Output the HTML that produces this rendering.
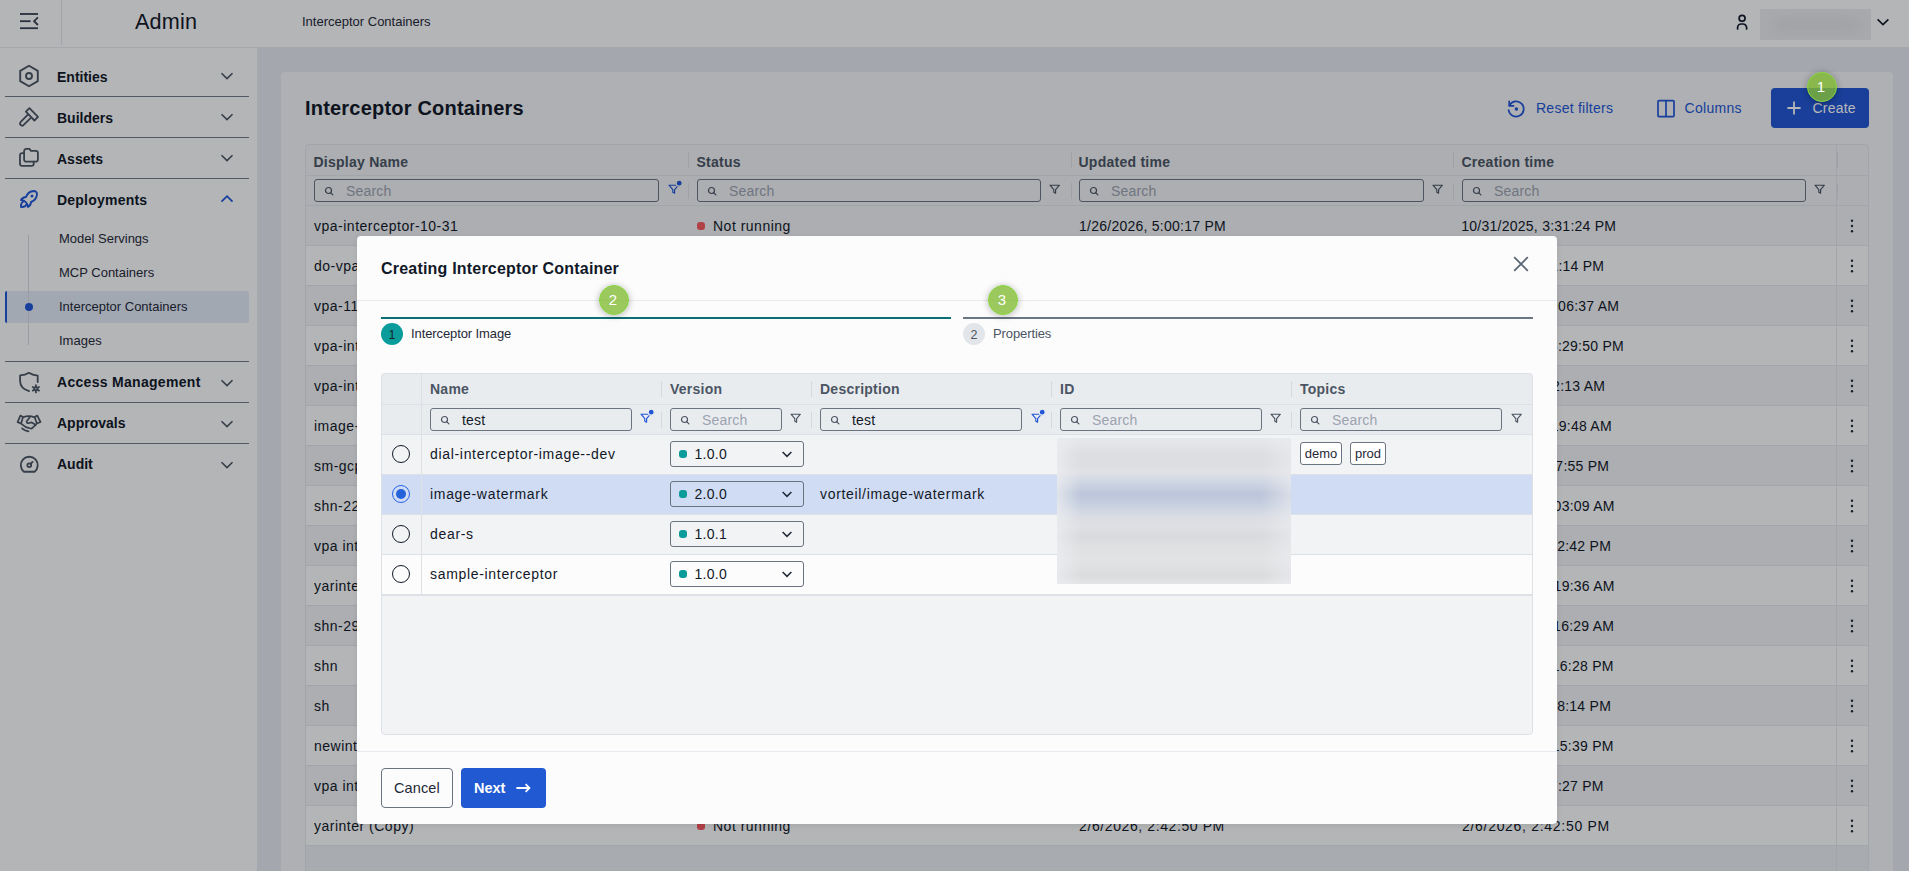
<!DOCTYPE html>
<html><head><meta charset="utf-8">
<style>
*{box-sizing:border-box;margin:0;padding:0}
html,body{width:1909px;height:871px;overflow:hidden;font-family:"Liberation Sans",sans-serif;color:#111827;background:#e9ecf0}
.abs{position:absolute}
.t{position:absolute;white-space:nowrap;line-height:1}
svg{position:absolute;overflow:visible}
.bd{position:absolute;left:0;top:0;right:0;bottom:0;pointer-events:none}
#header{left:0;top:0;width:1909px;height:48px;background:#fcfcfc;border-bottom:1px solid #e8eaee}
#sidebar{left:0;top:48px;width:257px;height:823px;background:#fcfcfc}
#main{left:257px;top:48px;width:1652px;height:823px;background:#e6e9ee}
#card{left:281px;top:72px;width:1612px;height:820px;background:#f4f5f7;border-radius:4px}
.inp{border:1px solid #6b7280;border-radius:3px}
.hd{font-size:14px;font-weight:700;color:#4b5563;letter-spacing:0.25px;margin-left:-0.5px}
.cell{font-size:14px;color:#111827;letter-spacing:0.5px;margin-top:-1.5px}
.mcell{letter-spacing:0.68px;margin-top:-1px}
.navdiv{position:absolute;left:5px;width:244px;height:1px;background:#747c89}
.navt{font-size:14px;font-weight:700;color:#111827;letter-spacing:0px;margin-top:0.5px}
.subt{font-size:13px;color:#1f2937}
#overlay{left:0;top:0;width:1909px;height:871px;background:rgba(5,8,15,0.29)}
#modal{left:357px;top:236px;width:1200px;height:588px;background:#fcfcfd;border-radius:4px;box-shadow:0 2px 6px rgba(0,0,0,0.08)}
.badge{width:30px;height:30px;border-radius:50%;background:rgba(129,187,49,0.79);border:1.8px solid #86d43c;box-shadow:0 1px 7px rgba(0,0,0,0.3)}
.tag{height:23px;border:1px solid #6b7280;border-radius:3px;background:#fff;font-size:13px;color:#1f2937;text-align:center;line-height:21px}
</style></head><body>
<div id="header" class="abs">
  <svg style="left:0;top:0" width="60" height="47" viewBox="0 0 60 47"><g stroke="#374151" stroke-width="1.8" fill="none" stroke-linecap="butt"><path d="M20 14H38"/><path d="M20 21.2H30.6"/><path d="M20 28.2H38"/><path d="M37.9 17.4L34.1 21.2L37.9 25"/></g></svg>
  <div class="abs" style="left:61px;top:0;width:1px;height:45px;background:#e3e6ea"></div>
  <div class="t" style="left:135px;top:11px;font-size:21.6px;color:#111827;letter-spacing:0.2px">Admin</div>
  <div class="t" style="left:302px;top:15px;font-size:13px;color:#1f2937">Interceptor Containers</div>
  <svg style="left:1730px;top:10px" width="24" height="24" viewBox="0 0 24 24"><g stroke="#111827" stroke-width="1.7" fill="none" stroke-linecap="round"><circle cx="12.1" cy="8.3" r="3"/><path d="M7.6 19V17.6A3.6 3.6 0 0 1 11.2 14H13A3.6 3.6 0 0 1 16.6 17.6V19"/></g></svg>
  <div class="abs" style="left:1760px;top:9px;width:111px;height:31px;background:#ececed;overflow:hidden"><div class="abs" style="left:14px;top:10px;width:85px;height:12px;background:#e0e0e2;filter:blur(6px)"></div></div>
  <svg style="left:1870px;top:12px" width="24" height="20" viewBox="0 0 24 20"><path d="M7.6 7.4L13 12.6L18.4 7.4" stroke="#111827" stroke-width="1.6" fill="none"/></svg>
</div>
<div id="sidebar" class="abs"></div>
<div class="abs" style="left:0;top:0;width:257px;height:871px">
  <svg style="left:17px;top:64px" width="24" height="24" viewBox="0 0 24 24"><g stroke="#4b5563" stroke-width="1.9" fill="none" stroke-linejoin="round"><path d="M12 1.8L20.8 6.9V17.1L12 22.2L3.2 17.1V6.9Z"/><circle cx="12" cy="12" r="3"/></g></svg>
  <div class="t navt" style="left:57px;top:69px">Entities</div>
  <svg style="left:216px;top:65px" width="22" height="22" viewBox="0 0 22 22"><path d="M5.5 8.2L11 13.6L16.5 8.2" stroke="#4b5563" stroke-width="1.6" fill="none"/></svg>
  <div class="navdiv" style="top:96px"></div>
  <svg style="left:17px;top:105px" width="24" height="24" viewBox="0 0 24 24"><g stroke="#4b5563" stroke-width="1.8" fill="none" stroke-linejoin="round" stroke-linecap="round"><path d="M12.4 3.1L21 11.8L17.4 15.5L8.9 6.7Z"/><path d="M10.6 9.9L3.5 17.2A2.1 2.1 0 0 0 6.4 20.2L13.6 13.1"/></g></svg>
  <div class="t navt" style="left:57px;top:110px">Builders</div>
  <svg style="left:216px;top:106px" width="22" height="22" viewBox="0 0 22 22"><path d="M5.5 8.2L11 13.6L16.5 8.2" stroke="#4b5563" stroke-width="1.6" fill="none"/></svg>
  <div class="navdiv" style="top:137px"></div>
  <svg style="left:17px;top:146px" width="24" height="24" viewBox="0 0 24 24"><g stroke="#4b5563" stroke-width="1.8" fill="none" stroke-linejoin="round" stroke-linecap="round"><path d="M7.1 5A2.1 2.1 0 0 1 9.2 2.9H12.4L14 4.8H18.8A2.1 2.1 0 0 1 20.9 6.9V13.6A2.1 2.1 0 0 1 18.8 15.7H9.2A2.1 2.1 0 0 1 7.1 13.6Z"/><path d="M7.1 7.1H5.1A2.1 2.1 0 0 0 3 9.2V17.8A2.1 2.1 0 0 0 5.1 19.9H14.6A2.1 2.1 0 0 0 16.7 17.8V15.7"/></g></svg>
  <div class="t navt" style="left:57px;top:151px">Assets</div>
  <svg style="left:216px;top:147px" width="22" height="22" viewBox="0 0 22 22"><path d="M5.5 8.2L11 13.6L16.5 8.2" stroke="#4b5563" stroke-width="1.6" fill="none"/></svg>
  <div class="navdiv" style="top:178px"></div>
  <svg style="left:17px;top:187px" width="24" height="24" viewBox="0 0 24 24"><g stroke="#2256d6" stroke-width="1.9" fill="none" stroke-linejoin="round" stroke-linecap="round"><path d="M4 13a8 8 0 0 1 7 7a6 6 0 0 0 3 -5a9 9 0 0 0 6 -8a3 3 0 0 0 -3 -3a9 9 0 0 0 -8 6a6 6 0 0 0 -5 3"/><path d="M7 14a6 6 0 0 0 -3 6a6 6 0 0 0 6 -3"/></g><circle cx="15" cy="9" r="1.5" fill="#2256d6"/></svg>
  <div class="t navt" style="left:57px;top:192px;letter-spacing:0.22px">Deployments</div>
  <svg style="left:216px;top:188px" width="22" height="22" viewBox="0 0 22 22"><path d="M5.5 13.6L11 8.2L16.5 13.6" stroke="#2256d6" stroke-width="1.8" fill="none"/></svg>
  <div class="t subt" style="left:59px;top:232px">Model Servings</div>
  <div class="t subt" style="left:59px;top:266px">MCP Containers</div>
  <div class="abs" style="left:5px;top:291px;width:244px;height:32px;background:#e3eaf6;border-left:2px solid #2256d6;border-radius:2px"></div>
  <div class="abs" style="left:28px;top:235px;width:1px;height:110px;background:#d7dbe0"></div>
  <div class="abs" style="left:25px;top:302.5px;width:8px;height:8px;border-radius:50%;background:#2256d6"></div>
  <div class="t subt" style="left:59px;top:300px">Interceptor Containers</div>
  <div class="t subt" style="left:59px;top:334px">Images</div>
  <div class="navdiv" style="top:361px"></div>
  <svg style="left:17px;top:371px" width="24" height="24" viewBox="0 0 24 24"><g stroke="#4b5563" stroke-width="1.8" fill="none" stroke-linejoin="round" stroke-linecap="round"><path d="M20.7 11.1V4.6C17 4.3 14.2 3.4 11.9 1.8C9.6 3.4 6.8 4.3 3.1 4.4V10.1C3.1 15 6.6 18.6 12.1 20.1"/><circle cx="18.9" cy="17.8" r="1.6"/><path d="M18.9 14.2V15.8M18.9 19.8V21.4M15.8 16L17.2 16.8M20.6 18.8L22 19.6M15.8 19.6L17.2 18.8M20.6 16.8L22 16"/></g></svg>
  <div class="t navt" style="left:57px;top:374px;letter-spacing:0.3px">Access Management</div>
  <svg style="left:216px;top:372px" width="22" height="22" viewBox="0 0 22 22"><path d="M5.5 8.2L11 13.6L16.5 8.2" stroke="#4b5563" stroke-width="1.6" fill="none"/></svg>
  <div class="navdiv" style="top:402px"></div>
  <svg style="left:17px;top:411px" width="26" height="24" viewBox="0 0 26 24"><g stroke="#4b5563" stroke-width="1.7" fill="none" stroke-linejoin="round" stroke-linecap="round"><path d="M3.4 4.6L6 6L4.1 12.5L0.6 11.1Z"/><path d="M20.3 4.6L17.7 6.1L19.8 12.5L23.5 11Z"/><path d="M6 6.3Q11.9 3.7 17.6 6.4"/><path d="M4.1 12.6L8.8 16.1L14.6 17.7L19.2 13.4"/><path d="M12.9 6.1L9.6 10.6Q9.8 12.5 11.4 12.2L14.6 11.4L18.6 13.8"/><path d="M5 17.3Q7.4 19.4 11.5 20.3"/></g></svg>
  <div class="t navt" style="left:57px;top:415px">Approvals</div>
  <svg style="left:216px;top:413px" width="22" height="22" viewBox="0 0 22 22"><path d="M5.5 8.2L11 13.6L16.5 8.2" stroke="#4b5563" stroke-width="1.6" fill="none"/></svg>
  <div class="navdiv" style="top:443px"></div>
  <svg style="left:17.7px;top:453.1px" width="22.56" height="22.56" viewBox="0 0 24 24"><g stroke="#4b5563" stroke-width="1.95" fill="none" stroke-linejoin="round" stroke-linecap="round"><path d="M6.4 20a9 9 0 1 1 11.2 0z"/><circle cx="12" cy="13" r="2"/><path d="M13.45 11.55L15.5 9.5"/></g></svg>
  <div class="t navt" style="left:57px;top:456px">Audit</div>
  <svg style="left:216px;top:454px" width="22" height="22" viewBox="0 0 22 22"><path d="M5.5 8.2L11 13.6L16.5 8.2" stroke="#4b5563" stroke-width="1.6" fill="none"/></svg>
</div>
<div id="main" class="abs"></div>
<div id="card" class="abs"></div>
<div class="t" style="left:305px;top:98px;font-size:20px;font-weight:700;color:#111827;letter-spacing:0.2px">Interceptor Containers</div>
<svg style="left:1505px;top:98px" width="22" height="22" viewBox="0 0 22 22"><g stroke="#2256d6" stroke-width="1.7" fill="none" stroke-linecap="round" stroke-linejoin="round"><path d="M4.4 7.4A7.6 7.6 0 1 1 3.6 12"/><path d="M4.2 3.4V7.8H8.6"/><circle cx="11.4" cy="11" r="0.9" fill="#2256d6"/></g></svg>
<div class="t" style="left:1536px;top:101px;font-size:14px;color:#2256d6;letter-spacing:0.25px">Reset filters</div>
<svg style="left:1654px;top:97px" width="22" height="22" viewBox="0 0 22 22"><g stroke="#2256d6" stroke-width="1.7" fill="none"><rect x="4" y="3.6" width="16" height="16" rx="1"/><path d="M12 3.6V19.6"/></g></svg>
<div class="t" style="left:1684.5px;top:101px;font-size:14px;color:#2256d6;letter-spacing:0.3px">Columns</div>
<div class="abs" style="left:1771px;top:88px;width:98px;height:40px;background:#2257d3;border-radius:4px"></div>
<svg style="left:1783px;top:97px" width="22" height="22" viewBox="0 0 22 22"><path d="M11 4.4V17.6M4.4 11H17.6" stroke="#fff" stroke-width="1.8"/></svg>
<div class="t" style="left:1812.5px;top:101px;font-size:14px;color:#fff;letter-spacing:0.2px">Create</div>
<div class="abs" style="left:305px;top:144px;width:1564px;height:740px;background:#eceef1;border-radius:4px;overflow:hidden"><div class="abs" style="left:0;top:0;width:1564px;height:62px;background:#f1f2f4"></div><div class="abs" style="left:0;top:31px;width:1564px;height:1px;background:#e3e6ea"></div><div class="abs" style="left:0;top:61px;width:1564px;height:1px;background:#e3e6ea"></div><div class="abs" style="left:0;top:62px;width:1564px;height:40px;background:#f1f2f4;border-bottom:1px solid #e3e6ea"></div><div class="t cell" style="left:9px;top:76px">vpa-interceptor-10-31</div><div class="abs" style="left:392px;top:78px;width:8px;height:8px;border-radius:3px;background:#f75a5f"></div><div class="t cell" style="left:408px;top:76px">Not running</div><div class="t cell" style="left:774px;top:76px;letter-spacing:0.25px">1/26/2026, 5:00:17 PM</div><div class="t cell" style="right:252.75px;top:76px;letter-spacing:0.25px">10/31/2025, 3:31:24 PM</div><svg style="left:1541px;top:74px" width="12" height="16" viewBox="0 0 12 16"><g fill="#1f2937"><circle cx="6" cy="2.8" r="1.2"/><circle cx="6" cy="8" r="1.2"/><circle cx="6" cy="13.2" r="1.2"/></g></svg><div class="abs" style="left:0;top:102px;width:1564px;height:40px;background:#fcfcfc;border-bottom:1px solid #e3e6ea"></div><div class="t cell" style="left:9px;top:116px">do-vpa-interceptor</div><div class="abs" style="left:392px;top:118px;width:8px;height:8px;border-radius:3px;background:#f75a5f"></div><div class="t cell" style="left:408px;top:116px">Not running</div><div class="t cell" style="left:774px;top:116px;letter-spacing:0.25px">1/20/2026, 4:11:14 PM</div><div class="t cell" style="right:264.75px;top:116px;letter-spacing:0.25px">11/3/2025, 1:21:14 PM</div><svg style="left:1541px;top:114px" width="12" height="16" viewBox="0 0 12 16"><g fill="#1f2937"><circle cx="6" cy="2.8" r="1.2"/><circle cx="6" cy="8" r="1.2"/><circle cx="6" cy="13.2" r="1.2"/></g></svg><div class="abs" style="left:0;top:142px;width:1564px;height:40px;background:#f1f2f4;border-bottom:1px solid #e3e6ea"></div><div class="t cell" style="left:9px;top:156px">vpa-11-interceptor</div><div class="abs" style="left:392px;top:158px;width:8px;height:8px;border-radius:3px;background:#f75a5f"></div><div class="t cell" style="left:408px;top:156px">Not running</div><div class="t cell" style="left:774px;top:156px;letter-spacing:0.25px">1/15/2026, 10:06:37 AM</div><div class="t cell" style="right:249.75px;top:156px;letter-spacing:0.25px">11/4/2025, 10:06:37 AM</div><svg style="left:1541px;top:154px" width="12" height="16" viewBox="0 0 12 16"><g fill="#1f2937"><circle cx="6" cy="2.8" r="1.2"/><circle cx="6" cy="8" r="1.2"/><circle cx="6" cy="13.2" r="1.2"/></g></svg><div class="abs" style="left:0;top:182px;width:1564px;height:40px;background:#fcfcfc;border-bottom:1px solid #e3e6ea"></div><div class="t cell" style="left:9px;top:196px">vpa-interceptor-2</div><div class="abs" style="left:392px;top:198px;width:8px;height:8px;border-radius:3px;background:#f75a5f"></div><div class="t cell" style="left:408px;top:196px">Not running</div><div class="t cell" style="left:774px;top:196px;letter-spacing:0.25px">1/12/2026, 3:29:50 PM</div><div class="t cell" style="right:245.04999999999995px;top:196px;letter-spacing:0.25px">11/5/2025, 3:29:50 PM</div><svg style="left:1541px;top:194px" width="12" height="16" viewBox="0 0 12 16"><g fill="#1f2937"><circle cx="6" cy="2.8" r="1.2"/><circle cx="6" cy="8" r="1.2"/><circle cx="6" cy="13.2" r="1.2"/></g></svg><div class="abs" style="left:0;top:222px;width:1564px;height:40px;background:#f1f2f4;border-bottom:1px solid #e3e6ea"></div><div class="t cell" style="left:9px;top:236px">vpa-interceptor-3</div><div class="abs" style="left:392px;top:238px;width:8px;height:8px;border-radius:3px;background:#f75a5f"></div><div class="t cell" style="left:408px;top:236px">Not running</div><div class="t cell" style="left:774px;top:236px;letter-spacing:0.25px">1/9/2026, 11:12:13 AM</div><div class="t cell" style="right:263.75px;top:236px;letter-spacing:0.25px">11/6/2025, 11:12:13 AM</div><svg style="left:1541px;top:234px" width="12" height="16" viewBox="0 0 12 16"><g fill="#1f2937"><circle cx="6" cy="2.8" r="1.2"/><circle cx="6" cy="8" r="1.2"/><circle cx="6" cy="13.2" r="1.2"/></g></svg><div class="abs" style="left:0;top:262px;width:1564px;height:40px;background:#fcfcfc;border-bottom:1px solid #e3e6ea"></div><div class="t cell" style="left:9px;top:276px">image-watermark-1</div><div class="abs" style="left:392px;top:278px;width:8px;height:8px;border-radius:3px;background:#f75a5f"></div><div class="t cell" style="left:408px;top:276px">Not running</div><div class="t cell" style="left:774px;top:276px;letter-spacing:0.25px">1/8/2026, 10:19:48 AM</div><div class="t cell" style="right:257.1500000000001px;top:276px;letter-spacing:0.25px">11/7/2025, 10:19:48 AM</div><svg style="left:1541px;top:274px" width="12" height="16" viewBox="0 0 12 16"><g fill="#1f2937"><circle cx="6" cy="2.8" r="1.2"/><circle cx="6" cy="8" r="1.2"/><circle cx="6" cy="13.2" r="1.2"/></g></svg><div class="abs" style="left:0;top:302px;width:1564px;height:40px;background:#f1f2f4;border-bottom:1px solid #e3e6ea"></div><div class="t cell" style="left:9px;top:316px">sm-gcp-interceptor</div><div class="abs" style="left:392px;top:318px;width:8px;height:8px;border-radius:3px;background:#f75a5f"></div><div class="t cell" style="left:408px;top:316px">Not running</div><div class="t cell" style="left:774px;top:316px;letter-spacing:0.25px">1/5/2026, 5:27:55 PM</div><div class="t cell" style="right:259.75px;top:316px;letter-spacing:0.25px">11/10/2025, 5:17:55 PM</div><svg style="left:1541px;top:314px" width="12" height="16" viewBox="0 0 12 16"><g fill="#1f2937"><circle cx="6" cy="2.8" r="1.2"/><circle cx="6" cy="8" r="1.2"/><circle cx="6" cy="13.2" r="1.2"/></g></svg><div class="abs" style="left:0;top:342px;width:1564px;height:40px;background:#fcfcfc;border-bottom:1px solid #e3e6ea"></div><div class="t cell" style="left:9px;top:356px">shn-22-interceptor</div><div class="abs" style="left:392px;top:358px;width:8px;height:8px;border-radius:3px;background:#f75a5f"></div><div class="t cell" style="left:408px;top:356px">Not running</div><div class="t cell" style="left:774px;top:356px;letter-spacing:0.25px">12/22/2025, 10:03:09 AM</div><div class="t cell" style="right:254.25px;top:356px;letter-spacing:0.25px">11/12/2025, 10:03:09 AM</div><svg style="left:1541px;top:354px" width="12" height="16" viewBox="0 0 12 16"><g fill="#1f2937"><circle cx="6" cy="2.8" r="1.2"/><circle cx="6" cy="8" r="1.2"/><circle cx="6" cy="13.2" r="1.2"/></g></svg><div class="abs" style="left:0;top:382px;width:1564px;height:40px;background:#f1f2f4;border-bottom:1px solid #e3e6ea"></div><div class="t cell" style="left:9px;top:396px">vpa interceptor test</div><div class="abs" style="left:392px;top:398px;width:8px;height:8px;border-radius:3px;background:#f75a5f"></div><div class="t cell" style="left:408px;top:396px">Not running</div><div class="t cell" style="left:774px;top:396px;letter-spacing:0.25px">12/18/2025, 1:22:42 PM</div><div class="t cell" style="right:257.95000000000005px;top:396px;letter-spacing:0.25px">11/13/2025, 1:22:42 PM</div><svg style="left:1541px;top:394px" width="12" height="16" viewBox="0 0 12 16"><g fill="#1f2937"><circle cx="6" cy="2.8" r="1.2"/><circle cx="6" cy="8" r="1.2"/><circle cx="6" cy="13.2" r="1.2"/></g></svg><div class="abs" style="left:0;top:422px;width:1564px;height:40px;background:#fcfcfc;border-bottom:1px solid #e3e6ea"></div><div class="t cell" style="left:9px;top:436px">yarinter</div><div class="abs" style="left:392px;top:438px;width:8px;height:8px;border-radius:3px;background:#f75a5f"></div><div class="t cell" style="left:408px;top:436px">Not running</div><div class="t cell" style="left:774px;top:436px;letter-spacing:0.25px">12/10/2025, 10:39:36 AM</div><div class="t cell" style="right:254.25px;top:436px;letter-spacing:0.25px">11/14/2025, 10:19:36 AM</div><svg style="left:1541px;top:434px" width="12" height="16" viewBox="0 0 12 16"><g fill="#1f2937"><circle cx="6" cy="2.8" r="1.2"/><circle cx="6" cy="8" r="1.2"/><circle cx="6" cy="13.2" r="1.2"/></g></svg><div class="abs" style="left:0;top:462px;width:1564px;height:40px;background:#f1f2f4;border-bottom:1px solid #e3e6ea"></div><div class="t cell" style="left:9px;top:476px">shn-29-interceptor</div><div class="abs" style="left:392px;top:478px;width:8px;height:8px;border-radius:3px;background:#f75a5f"></div><div class="t cell" style="left:408px;top:476px">Not running</div><div class="t cell" style="left:774px;top:476px;letter-spacing:0.25px">12/9/2025, 11:06:29 AM</div><div class="t cell" style="right:254.75px;top:476px;letter-spacing:0.25px">11/17/2025, 11:16:29 AM</div><svg style="left:1541px;top:474px" width="12" height="16" viewBox="0 0 12 16"><g fill="#1f2937"><circle cx="6" cy="2.8" r="1.2"/><circle cx="6" cy="8" r="1.2"/><circle cx="6" cy="13.2" r="1.2"/></g></svg><div class="abs" style="left:0;top:502px;width:1564px;height:40px;background:#fcfcfc;border-bottom:1px solid #e3e6ea"></div><div class="t cell" style="left:9px;top:516px">shn</div><div class="abs" style="left:392px;top:518px;width:8px;height:8px;border-radius:3px;background:#f75a5f"></div><div class="t cell" style="left:408px;top:516px">Not running</div><div class="t cell" style="left:774px;top:516px;letter-spacing:0.25px">12/5/2025, 3:16:28 PM</div><div class="t cell" style="right:255.3499999999999px;top:516px;letter-spacing:0.25px">11/18/2025, 3:16:28 PM</div><svg style="left:1541px;top:514px" width="12" height="16" viewBox="0 0 12 16"><g fill="#1f2937"><circle cx="6" cy="2.8" r="1.2"/><circle cx="6" cy="8" r="1.2"/><circle cx="6" cy="13.2" r="1.2"/></g></svg><div class="abs" style="left:0;top:542px;width:1564px;height:40px;background:#f1f2f4;border-bottom:1px solid #e3e6ea"></div><div class="t cell" style="left:9px;top:556px">sh</div><div class="abs" style="left:392px;top:558px;width:8px;height:8px;border-radius:3px;background:#f75a5f"></div><div class="t cell" style="left:408px;top:556px">Not running</div><div class="t cell" style="left:774px;top:556px;letter-spacing:0.25px">12/3/2025, 2:28:14 PM</div><div class="t cell" style="right:257.95000000000005px;top:556px;letter-spacing:0.25px">11/19/2025, 2:28:14 PM</div><svg style="left:1541px;top:554px" width="12" height="16" viewBox="0 0 12 16"><g fill="#1f2937"><circle cx="6" cy="2.8" r="1.2"/><circle cx="6" cy="8" r="1.2"/><circle cx="6" cy="13.2" r="1.2"/></g></svg><div class="abs" style="left:0;top:582px;width:1564px;height:40px;background:#fcfcfc;border-bottom:1px solid #e3e6ea"></div><div class="t cell" style="left:9px;top:596px">newinterceptor</div><div class="abs" style="left:392px;top:598px;width:8px;height:8px;border-radius:3px;background:#f75a5f"></div><div class="t cell" style="left:408px;top:596px">Not running</div><div class="t cell" style="left:774px;top:596px;letter-spacing:0.25px">11/28/2025, 4:45:39 PM</div><div class="t cell" style="right:255.3499999999999px;top:596px;letter-spacing:0.25px">11/20/2025, 4:15:39 PM</div><svg style="left:1541px;top:594px" width="12" height="16" viewBox="0 0 12 16"><g fill="#1f2937"><circle cx="6" cy="2.8" r="1.2"/><circle cx="6" cy="8" r="1.2"/><circle cx="6" cy="13.2" r="1.2"/></g></svg><div class="abs" style="left:0;top:622px;width:1564px;height:40px;background:#f1f2f4;border-bottom:1px solid #e3e6ea"></div><div class="t cell" style="left:9px;top:636px">vpa interceptor</div><div class="abs" style="left:392px;top:638px;width:8px;height:8px;border-radius:3px;background:#f75a5f"></div><div class="t cell" style="left:408px;top:636px">Not running</div><div class="t cell" style="left:774px;top:636px;letter-spacing:0.25px">11/20/2025, 2:17:27 PM</div><div class="t cell" style="right:265.25px;top:636px;letter-spacing:0.25px">11/21/2025, 2:17:27 PM</div><svg style="left:1541px;top:634px" width="12" height="16" viewBox="0 0 12 16"><g fill="#1f2937"><circle cx="6" cy="2.8" r="1.2"/><circle cx="6" cy="8" r="1.2"/><circle cx="6" cy="13.2" r="1.2"/></g></svg><div class="abs" style="left:0;top:662px;width:1564px;height:40px;background:#fcfcfc;border-bottom:1px solid #e3e6ea"></div><div class="t cell" style="left:9px;top:676px">yarinter (Copy)</div><div class="abs" style="left:392px;top:678px;width:8px;height:8px;border-radius:3px;background:#f75a5f"></div><div class="t cell" style="left:408px;top:676px">Not running</div><div class="t cell" style="left:774px;top:676px;letter-spacing:0.6px">2/6/2026, 2:42:50 PM</div><div class="t cell" style="left:1157px;top:676px;letter-spacing:0.7px">2/6/2026, 2:42:50 PM</div><svg style="left:1541px;top:674px" width="12" height="16" viewBox="0 0 12 16"><g fill="#1f2937"><circle cx="6" cy="2.8" r="1.2"/><circle cx="6" cy="8" r="1.2"/><circle cx="6" cy="13.2" r="1.2"/></g></svg><div class="t hd" style="left:9px;top:10.5px">Display Name</div><div class="abs" style="left:383px;top:8px;width:1px;height:16px;background:#dde0e5"></div><div class="abs" style="left:383px;top:39px;width:1px;height:16px;background:#dde0e5"></div><div class="t hd" style="left:392px;top:10.5px">Status</div><div class="abs" style="left:766px;top:8px;width:1px;height:16px;background:#dde0e5"></div><div class="abs" style="left:766px;top:39px;width:1px;height:16px;background:#dde0e5"></div><div class="t hd" style="left:774px;top:10.5px">Updated time</div><div class="abs" style="left:1148px;top:8px;width:1px;height:16px;background:#dde0e5"></div><div class="abs" style="left:1148px;top:39px;width:1px;height:16px;background:#dde0e5"></div><div class="t hd" style="left:1157px;top:10.5px">Creation time</div><div class="abs" style="left:1532px;top:8px;width:1px;height:16px;background:#dde0e5"></div><div class="abs" style="left:1532px;top:39px;width:1px;height:16px;background:#dde0e5"></div><div class="abs" style="left:1531px;top:0;width:1px;height:740px;background:#e3e6ea"></div><div class="abs inp" style="left:9px;top:35px;width:345px;height:23px;background:#f1f2f4"><svg style="left:8.5px;top:6px" width="11" height="11" viewBox="0 0 11 11"><g stroke="#4b5563" stroke-width="1.2" fill="none" stroke-linecap="round"><circle cx="4.5" cy="4.5" r="3"/><path d="M6.8 6.8L8.9 8.9"/></g></svg><div class="t" style="left:31px;top:4px;font-size:14px;color:#9ca3af;letter-spacing:0.2px">Search</div></div><svg style="left:362px;top:38px" width="14" height="14" viewBox="0 0 14 14"><path d="M2 3.2H11.4L7.6 7.6V11.2L5.8 10.2V7.6Z" stroke="#2256d6" stroke-width="1.15" fill="none" stroke-linejoin="round"/><circle cx="12.2" cy="1.2" r="3" fill="#2256d6" stroke="#f1f2f4" stroke-width="1.2"/></svg><div class="abs inp" style="left:392px;top:35px;width:344px;height:23px;background:#f1f2f4"><svg style="left:8.5px;top:6px" width="11" height="11" viewBox="0 0 11 11"><g stroke="#4b5563" stroke-width="1.2" fill="none" stroke-linecap="round"><circle cx="4.5" cy="4.5" r="3"/><path d="M6.8 6.8L8.9 8.9"/></g></svg><div class="t" style="left:31px;top:4px;font-size:14px;color:#9ca3af;letter-spacing:0.2px">Search</div></div><svg style="left:743px;top:38px" width="14" height="14" viewBox="0 0 14 14"><path d="M2 3.2H11.4L7.6 7.6V11.2L5.8 10.2V7.6Z" stroke="#4b5563" stroke-width="1.15" fill="none" stroke-linejoin="round"/></svg><div class="abs inp" style="left:774px;top:35px;width:345px;height:23px;background:#f1f2f4"><svg style="left:8.5px;top:6px" width="11" height="11" viewBox="0 0 11 11"><g stroke="#4b5563" stroke-width="1.2" fill="none" stroke-linecap="round"><circle cx="4.5" cy="4.5" r="3"/><path d="M6.8 6.8L8.9 8.9"/></g></svg><div class="t" style="left:31px;top:4px;font-size:14px;color:#9ca3af;letter-spacing:0.2px">Search</div></div><svg style="left:1126px;top:38px" width="14" height="14" viewBox="0 0 14 14"><path d="M2 3.2H11.4L7.6 7.6V11.2L5.8 10.2V7.6Z" stroke="#4b5563" stroke-width="1.15" fill="none" stroke-linejoin="round"/></svg><div class="abs inp" style="left:1157px;top:35px;width:344px;height:23px;background:#f1f2f4"><svg style="left:8.5px;top:6px" width="11" height="11" viewBox="0 0 11 11"><g stroke="#4b5563" stroke-width="1.2" fill="none" stroke-linecap="round"><circle cx="4.5" cy="4.5" r="3"/><path d="M6.8 6.8L8.9 8.9"/></g></svg><div class="t" style="left:31px;top:4px;font-size:14px;color:#9ca3af;letter-spacing:0.2px">Search</div></div><svg style="left:1508px;top:38px" width="14" height="14" viewBox="0 0 14 14"><path d="M2 3.2H11.4L7.6 7.6V11.2L5.8 10.2V7.6Z" stroke="#4b5563" stroke-width="1.15" fill="none" stroke-linejoin="round"/></svg><div class="bd" style="border:1px solid #e3e6ea;border-radius:4px"></div></div>
<div id="overlay" class="abs"></div>
<div class="abs badge" style="left:1806.5px;top:71.7px"><div class="t" style="left:-1.5px;width:30px;text-align:center;top:6px;font-size:15px;color:#fff">1</div></div>
<div id="modal" class="abs"><div class="t" style="left:24px;top:24.5px;font-size:16px;font-weight:700;color:#111827;letter-spacing:0.2px">Creating Interceptor Container</div><svg style="left:1153px;top:17px" width="22" height="22" viewBox="0 0 22 22"><path d="M4.2 4.2L17.8 17.8M17.8 4.2L4.2 17.8" stroke="#5b6673" stroke-width="1.8"/></svg><div class="abs" style="left:0;top:64px;width:1200px;height:1px;background:#e6e9ed"></div><div class="abs" style="left:24px;top:81px;width:570px;height:2px;background:#0c6f73"></div><div class="abs" style="left:606px;top:81px;width:570px;height:2px;background:#6b7684"></div><div class="abs" style="left:24px;top:87px;width:22px;height:22px;border-radius:50%;background:#0a9b9b"></div><div class="t" style="left:24px;top:92.5px;width:22px;text-align:center;font-size:12.5px;color:#16262a">1</div><div class="t" style="left:54px;top:90.80000000000001px;font-size:13px;color:#1f2937;letter-spacing:-0.1px">Interceptor Image</div><div class="abs" style="left:606px;top:87px;width:22px;height:22px;border-radius:50%;background:#e2e5e9"></div><div class="t" style="left:606px;top:92.5px;width:22px;text-align:center;font-size:12.5px;color:#4b5563">2</div><div class="t" style="left:636px;top:90.80000000000001px;font-size:13px;color:#4b5563;letter-spacing:-0.1px">Properties</div><div class="abs" style="left:24px;top:137px;width:1152px;height:362px;border-radius:4px;overflow:hidden"><div class="abs" style="left:0;top:0;width:1152px;height:62px;background:#e9ecef"></div><div class="abs" style="left:0;top:31px;width:1152px;height:1px;background:#dde1e6"></div><div class="abs" style="left:0;top:61px;width:1152px;height:1px;background:#dde1e6"></div><div class="abs" style="left:0;top:62px;width:1152px;height:300px;background:#f2f3f5"></div><div class="abs" style="left:0;top:62px;width:1152px;height:40px;background:#f2f3f5;border-bottom:1px solid #dde1e6"></div><div class="abs" style="left:10.5px;top:71.5px;width:18px;height:18px;border-radius:50%;border:1.4px solid #111827;background:transparent"></div><div class="t cell mcell" style="left:49px;top:75px">dial-interceptor-image--dev</div><div class="abs" style="left:289px;top:68px;width:134px;height:26px;border:1px solid #6b7280;border-radius:3px;background:#f2f3f5"></div><div class="abs" style="left:298px;top:77px;width:8px;height:8px;border-radius:3px;background:#0a9b9b"></div><div class="t cell mcell" style="left:313.5px;top:75px;letter-spacing:0.3px">1.0.0</div><svg style="left:399px;top:74px" width="14" height="14" viewBox="0 0 14 14"><path d="M2.6 5L7 9.4L11.4 5" stroke="#1f2937" stroke-width="1.5" fill="none"/></svg><div class="abs" style="left:0;top:102px;width:1152px;height:40px;background:#d0dcf4;border-bottom:1px solid #dde1e6"></div><div class="abs" style="left:10.5px;top:111.5px;width:18px;height:18px;border-radius:50%;border:1.3px solid #2563eb;background:transparent"></div><div class="abs" style="left:14.5px;top:115.5px;width:10px;height:10px;border-radius:50%;background:#2563db"></div><div class="t cell mcell" style="left:49px;top:115px">image-watermark</div><div class="abs" style="left:289px;top:108px;width:134px;height:26px;border:1px solid #6b7280;border-radius:3px;background:#d0dcf4"></div><div class="abs" style="left:298px;top:117px;width:8px;height:8px;border-radius:3px;background:#0a9b9b"></div><div class="t cell mcell" style="left:313.5px;top:115px;letter-spacing:0.3px">2.0.0</div><svg style="left:399px;top:114px" width="14" height="14" viewBox="0 0 14 14"><path d="M2.6 5L7 9.4L11.4 5" stroke="#1f2937" stroke-width="1.5" fill="none"/></svg><div class="t cell mcell" style="left:439px;top:115px">vorteil/image-watermark</div><div class="abs" style="left:0;top:142px;width:1152px;height:40px;background:#f2f3f5;border-bottom:1px solid #dde1e6"></div><div class="abs" style="left:10.5px;top:151.5px;width:18px;height:18px;border-radius:50%;border:1.4px solid #111827;background:transparent"></div><div class="t cell mcell" style="left:49px;top:155px">dear-s</div><div class="abs" style="left:289px;top:148px;width:134px;height:26px;border:1px solid #6b7280;border-radius:3px;background:#f2f3f5"></div><div class="abs" style="left:298px;top:157px;width:8px;height:8px;border-radius:3px;background:#0a9b9b"></div><div class="t cell mcell" style="left:313.5px;top:155px;letter-spacing:0.3px">1.0.1</div><svg style="left:399px;top:154px" width="14" height="14" viewBox="0 0 14 14"><path d="M2.6 5L7 9.4L11.4 5" stroke="#1f2937" stroke-width="1.5" fill="none"/></svg><div class="abs" style="left:0;top:182px;width:1152px;height:40px;background:#fcfcfc;border-bottom:1px solid #dde1e6"></div><div class="abs" style="left:10.5px;top:191.5px;width:18px;height:18px;border-radius:50%;border:1.4px solid #111827;background:transparent"></div><div class="t cell mcell" style="left:49px;top:195px">sample-interceptor</div><div class="abs" style="left:289px;top:188px;width:134px;height:26px;border:1px solid #6b7280;border-radius:3px;background:#fcfcfc"></div><div class="abs" style="left:298px;top:197px;width:8px;height:8px;border-radius:3px;background:#0a9b9b"></div><div class="t cell mcell" style="left:313.5px;top:195px;letter-spacing:0.3px">1.0.0</div><svg style="left:399px;top:194px" width="14" height="14" viewBox="0 0 14 14"><path d="M2.6 5L7 9.4L11.4 5" stroke="#1f2937" stroke-width="1.5" fill="none"/></svg><div class="abs" style="left:40px;top:0;width:1px;height:222px;background:#dde1e6"></div><div class="abs" style="left:0;top:222px;width:1152px;height:1px;background:#dde1e6"></div><div class="t hd" style="left:49px;top:9px;margin-left:0">Name</div><div class="abs" style="left:280px;top:8px;width:1px;height:16px;background:#d5d9de"></div><div class="abs" style="left:280px;top:39px;width:1px;height:16px;background:#d5d9de"></div><div class="t hd" style="left:289px;top:9px;margin-left:0">Version</div><div class="abs" style="left:430px;top:8px;width:1px;height:16px;background:#d5d9de"></div><div class="abs" style="left:430px;top:39px;width:1px;height:16px;background:#d5d9de"></div><div class="t hd" style="left:439px;top:9px;margin-left:0">Description</div><div class="abs" style="left:670px;top:8px;width:1px;height:16px;background:#d5d9de"></div><div class="abs" style="left:670px;top:39px;width:1px;height:16px;background:#d5d9de"></div><div class="t hd" style="left:679px;top:9px;margin-left:0">ID</div><div class="abs" style="left:910px;top:8px;width:1px;height:16px;background:#d5d9de"></div><div class="abs" style="left:910px;top:39px;width:1px;height:16px;background:#d5d9de"></div><div class="t hd" style="left:919px;top:9px;margin-left:0">Topics</div><div class="abs inp" style="left:49px;top:35px;width:202px;height:23px;background:#e9ecef"><svg style="left:8.5px;top:6px" width="11" height="11" viewBox="0 0 11 11"><g stroke="#4b5563" stroke-width="1.2" fill="none" stroke-linecap="round"><circle cx="4.5" cy="4.5" r="3"/><path d="M6.8 6.8L8.9 8.9"/></g></svg><div class="t" style="left:31px;top:4px;font-size:14px;color:#111827;letter-spacing:0.2px">test</div></div><svg style="left:258px;top:38px" width="14" height="14" viewBox="0 0 14 14"><path d="M2 3.2H11.4L7.6 7.6V11.2L5.8 10.2V7.6Z" stroke="#2256d6" stroke-width="1.15" fill="none" stroke-linejoin="round"/><circle cx="12.2" cy="1.2" r="3" fill="#2256d6" stroke="#e9ecef" stroke-width="1.2"/></svg><div class="abs inp" style="left:289px;top:35px;width:112px;height:23px;background:#e9ecef"><svg style="left:8.5px;top:6px" width="11" height="11" viewBox="0 0 11 11"><g stroke="#4b5563" stroke-width="1.2" fill="none" stroke-linecap="round"><circle cx="4.5" cy="4.5" r="3"/><path d="M6.8 6.8L8.9 8.9"/></g></svg><div class="t" style="left:31px;top:4px;font-size:14px;color:#9ca3af;letter-spacing:0.2px">Search</div></div><svg style="left:408px;top:38px" width="14" height="14" viewBox="0 0 14 14"><path d="M2 3.2H11.4L7.6 7.6V11.2L5.8 10.2V7.6Z" stroke="#4b5563" stroke-width="1.15" fill="none" stroke-linejoin="round"/></svg><div class="abs inp" style="left:439px;top:35px;width:202px;height:23px;background:#e9ecef"><svg style="left:8.5px;top:6px" width="11" height="11" viewBox="0 0 11 11"><g stroke="#4b5563" stroke-width="1.2" fill="none" stroke-linecap="round"><circle cx="4.5" cy="4.5" r="3"/><path d="M6.8 6.8L8.9 8.9"/></g></svg><div class="t" style="left:31px;top:4px;font-size:14px;color:#111827;letter-spacing:0.2px">test</div></div><svg style="left:649px;top:38px" width="14" height="14" viewBox="0 0 14 14"><path d="M2 3.2H11.4L7.6 7.6V11.2L5.8 10.2V7.6Z" stroke="#2256d6" stroke-width="1.15" fill="none" stroke-linejoin="round"/><circle cx="12.2" cy="1.2" r="3" fill="#2256d6" stroke="#e9ecef" stroke-width="1.2"/></svg><div class="abs inp" style="left:679px;top:35px;width:202px;height:23px;background:#e9ecef"><svg style="left:8.5px;top:6px" width="11" height="11" viewBox="0 0 11 11"><g stroke="#4b5563" stroke-width="1.2" fill="none" stroke-linecap="round"><circle cx="4.5" cy="4.5" r="3"/><path d="M6.8 6.8L8.9 8.9"/></g></svg><div class="t" style="left:31px;top:4px;font-size:14px;color:#9ca3af;letter-spacing:0.2px">Search</div></div><svg style="left:888px;top:38px" width="14" height="14" viewBox="0 0 14 14"><path d="M2 3.2H11.4L7.6 7.6V11.2L5.8 10.2V7.6Z" stroke="#4b5563" stroke-width="1.15" fill="none" stroke-linejoin="round"/></svg><div class="abs inp" style="left:919px;top:35px;width:202px;height:23px;background:#e9ecef"><svg style="left:8.5px;top:6px" width="11" height="11" viewBox="0 0 11 11"><g stroke="#4b5563" stroke-width="1.2" fill="none" stroke-linecap="round"><circle cx="4.5" cy="4.5" r="3"/><path d="M6.8 6.8L8.9 8.9"/></g></svg><div class="t" style="left:31px;top:4px;font-size:14px;color:#9ca3af;letter-spacing:0.2px">Search</div></div><svg style="left:1129px;top:38px" width="14" height="14" viewBox="0 0 14 14"><path d="M2 3.2H11.4L7.6 7.6V11.2L5.8 10.2V7.6Z" stroke="#4b5563" stroke-width="1.15" fill="none" stroke-linejoin="round"/></svg><div class="abs" style="left:676px;top:65px;width:234px;height:146px;overflow:hidden;background:linear-gradient(180deg,#e7e8eb 0px,#dddee2 16px,#dcdde1 26px,#e0e1e5 34px,#cfd6e3 44px,#bcc6da 56px,#c6cfe0 66px,#d9dce3 78px,#dfe0e3 88px,#d9dadd 98px,#dfe0e2 110px,#e2e3e5 122px,#dbdcde 138px,#e4e5e7 146px)"><div class="abs" style="left:0;top:0;width:234px;height:146px;background:linear-gradient(90deg,rgba(236,237,240,0.75) 0px,rgba(236,237,240,0) 24px,rgba(236,237,240,0) 205px,rgba(236,237,240,0.6) 234px)"></div></div><div class="abs tag" style="left:919px;top:69px;width:42px">demo</div><div class="abs tag" style="left:969px;top:69px;width:36px">prod</div><div class="bd" style="border:1px solid #dde1e6;border-radius:4px"></div></div><div class="abs" style="left:0;top:515px;width:1200px;height:1px;background:#e6e9ed"></div><div class="abs" style="left:24px;top:532px;width:72px;height:40px;border:1px solid #6b7280;border-radius:4px;background:#fcfcfd"></div><div class="t" style="left:37px;top:545px;font-size:14.5px;color:#1f2937;letter-spacing:0.1px">Cancel</div><div class="abs" style="left:104px;top:532px;width:85px;height:40px;border-radius:4px;background:#2059d1"></div><div class="t" style="left:117px;top:545px;font-size:14.5px;font-weight:700;color:#fff">Next</div><svg style="left:156px;top:542px" width="20" height="20" viewBox="0 0 20 20"><path d="M3.4 10H16.4M12.6 6.2L16.4 10L12.6 13.8" stroke="#fff" stroke-width="1.8" fill="none"/></svg><div class="abs badge" style="left:241.5px;top:48.5px"><div class="t" style="left:-1.5px;width:30px;text-align:center;top:6px;font-size:15px;color:#fff">2</div></div><div class="abs badge" style="left:630.5px;top:48.5px"><div class="t" style="left:-1.5px;width:30px;text-align:center;top:6px;font-size:15px;color:#fff">3</div></div></div>
</body></html>
